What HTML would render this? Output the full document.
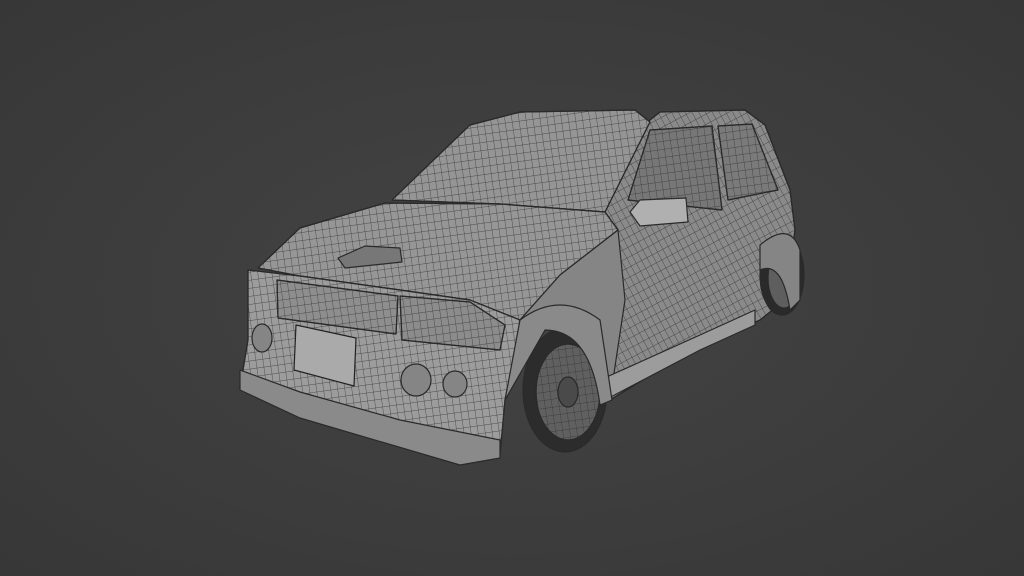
<!DOCTYPE html>
<html><head><meta charset="utf-8"><style>
html,body{margin:0;padding:0;width:1024px;height:576px;overflow:hidden;background:#3c3c3c}
</style></head><body>
<svg width="1024" height="576" viewBox="0 0 1024 576" xmlns="http://www.w3.org/2000/svg">
<defs>
<radialGradient id="bg" cx="50%" cy="50%" r="70%">
<stop offset="0" stop-color="#444"/><stop offset="1" stop-color="#373737"/>
</radialGradient>
<pattern id="grid" width="7" height="8" patternUnits="userSpaceOnUse" patternTransform="rotate(-8)">
<path d="M0 0H7M0 0V8" stroke="#333" stroke-width="0.7" fill="none"/>
</pattern>
<pattern id="grid2" width="6" height="9" patternUnits="userSpaceOnUse" patternTransform="rotate(-28)">
<path d="M0 0H6M0 0V9" stroke="#333" stroke-width="0.7" fill="none"/>
</pattern>
</defs>
<rect width="1024" height="576" fill="url(#bg)"/>
<g stroke="#2a2a2a" stroke-width="1.2" stroke-linejoin="round">
<path d="M600 212 L640 128 L660 112 L745 110 L765 125 L790 190 L795 230 L785 300 L760 320 L700 345 L610 400 L590 330 Z" fill="#8a8a8a"/>
<path d="M600 212 L640 128 L660 112 L745 110 L765 125 L790 190 L795 230 L785 300 L760 320 L700 345 L610 400 L590 330 Z" fill="url(#grid2)"/>
<path d="M628 200 L650 130 L712 126 L722 210 Z" fill="#777"/>
<path d="M718 126 L752 124 L778 190 L728 200 Z" fill="#7a7a7a"/>
<path d="M628 200 L650 130 L712 126 L722 210 Z" fill="url(#grid)"/>
<path d="M718 126 L752 124 L778 190 L728 200 Z" fill="url(#grid)"/>
<path d="M392 200 L470 125 L520 112 L635 110 L650 122 L605 212 L500 204 Z" fill="#959595"/>
<path d="M392 200 L470 125 L520 112 L635 110 L650 122 L605 212 L500 204 Z" fill="url(#grid)"/>
<path d="M258 268 L300 228 L385 203 L500 204 L605 212 L618 230 L560 275 L520 320 L470 300 L400 290 L300 276 Z" fill="#969696"/>
<path d="M258 268 L300 228 L385 203 L500 204 L605 212 L618 230 L560 275 L520 320 L470 300 L400 290 L300 276 Z" fill="url(#grid)"/>
<path d="M520 320 L560 275 L618 230 L625 300 L610 400 L590 330 L560 310 Z" fill="#858585"/>
<path d="M248 270 L300 276 L400 290 L470 300 L520 320 L515 350 L505 400 L500 455 L460 462 L400 440 L300 410 L240 388 L248 340 Z" fill="#9c9c9c"/>
<path d="M248 270 L300 276 L400 290 L470 300 L520 320 L515 350 L505 400 L500 455 L460 462 L400 440 L300 410 L240 388 L248 340 Z" fill="url(#grid)"/>
<path d="M240 370 L300 392 L400 420 L500 440 L500 458 L460 465 L300 418 L240 390 Z" fill="#8a8a8a"/>
<path d="M277 280 L398 296 L396 334 L278 318 Z" fill="#8e8e8e"/>
<path d="M277 280 L398 296 L396 334 L278 318 Z" fill="url(#grid)"/>
<path d="M400 296 L470 302 L505 325 L500 350 L402 340 Z" fill="#8c8c8c"/>
<path d="M400 296 L470 302 L505 325 L500 350 L402 340 Z" fill="url(#grid)"/>
<path d="M296 325 L356 338 L354 386 L294 370 Z" fill="#aaaaaa" stroke="#222"/>
<path d="M338 258 L365 246 L400 248 L402 262 L345 268 Z" fill="#777"/>
<ellipse cx="416" cy="380" rx="15" ry="16" fill="#858585"/>
<ellipse cx="455" cy="384" rx="12" ry="13" fill="#858585"/>
<ellipse cx="262" cy="338" rx="10" ry="14" fill="#858585"/>
<path d="M630 212 L640 200 L686 198 L688 222 L640 226 Z" fill="#b0b0b0"/>
<path d="M600 380 L700 335 L755 310 L755 325 L700 350 L605 400 Z" fill="#9c9c9c"/>
<ellipse cx="782" cy="275" rx="22" ry="40" fill="#2a2a2a"/>
<ellipse cx="784" cy="278" rx="16" ry="30" fill="#5e5e5e"/>
<ellipse cx="565" cy="390" rx="42" ry="62" fill="#2c2c2c"/>
<ellipse cx="568" cy="392" rx="32" ry="48" fill="#606060"/>
<ellipse cx="568" cy="392" rx="32" ry="48" fill="url(#grid)"/>
<ellipse cx="568" cy="392" rx="10" ry="15" fill="#4a4a4a"/>
<path d="M760 245 Q790 220 800 250 L800 300 L790 310 Q782 260 760 270 Z" fill="#858585"/>
<path d="M520 320 Q560 290 600 320 L612 400 L600 405 Q590 330 545 330 L505 400 Z" fill="#8a8a8a"/>
</g>
</svg>
</body></html>
